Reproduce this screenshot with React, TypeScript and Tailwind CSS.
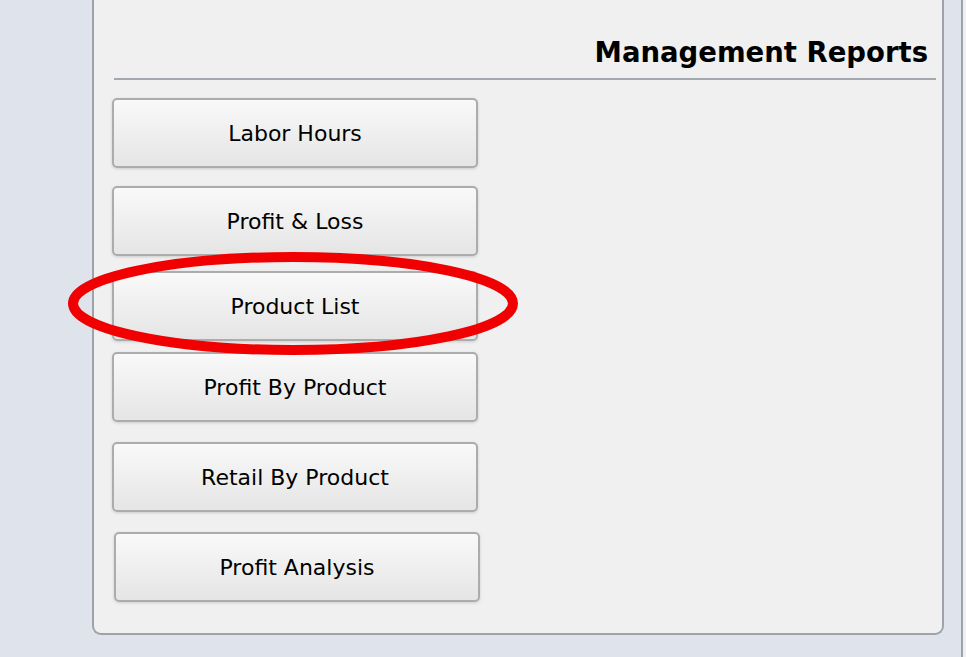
const reports = [
  { label: "Labor Hours", mt: "mt-[18px]", ml: "ml-[18px]" },
  { label: "Profit & Loss", mt: "mt-[18px]", ml: "ml-[18px]" },
  { label: "Product List", mt: "mt-[15px]", ml: "ml-[18px]" },
  { label: "Profit By Product", mt: "mt-[11px]", ml: "ml-[18px]" },
  { label: "Retail By Product", mt: "mt-[20px]", ml: "ml-[18px]" },
  { label: "Profit Analysis", mt: "mt-[20px]", ml: "ml-[20px]" },
];

function ReportButton({ label, mt, ml }: { label: string; mt: string; ml: string }) {
  return (
    <button
      className={`${mt} ${ml} flex h-[70px] w-[366px] items-center justify-center rounded-[5px] border-2 border-[#acacac] bg-gradient-to-b from-[#f9f9f9] to-[#e5e5e5] text-[22px] text-black shadow-[0_1px_3px_rgba(0,0,0,0.15)]`}
    >
      {label}
    </button>
  );
}

export default function App() {
  return (
    <div
      className="relative flex h-[657px] w-[966px] overflow-hidden bg-[#dfe4ec]"
      style={{ fontFamily: '"DejaVu Sans", Verdana, sans-serif' }}
    >
      <div className="ml-[92px] flex h-[635px] w-[852px] flex-col rounded-b-[9px] border-x-2 border-b-2 border-[#9ea3a9] bg-[#f0f0f0]">
        <div className="mt-[34px] pr-[14px] text-right text-[27.5px] font-bold leading-[36px] text-black">
          Management Reports
        </div>
        <div className="ml-[20px] mr-[6px] mt-[8px] h-[2px] bg-[#a3a8ae]" />
        {reports.map((r) => (
          <ReportButton key={r.label} {...r} />
        ))}
      </div>
      <div className="ml-[17px] h-[657px] flex-1 border-l-2 border-[#9ea3a9] bg-[#f0f0f0]" />

      <svg className="pointer-events-none absolute left-0 top-0" width="966" height="657">
        <ellipse cx="293" cy="303.5" rx="220" ry="46.5" fill="none" stroke="#f00000" strokeWidth="10" />
      </svg>
    </div>
  );
}
